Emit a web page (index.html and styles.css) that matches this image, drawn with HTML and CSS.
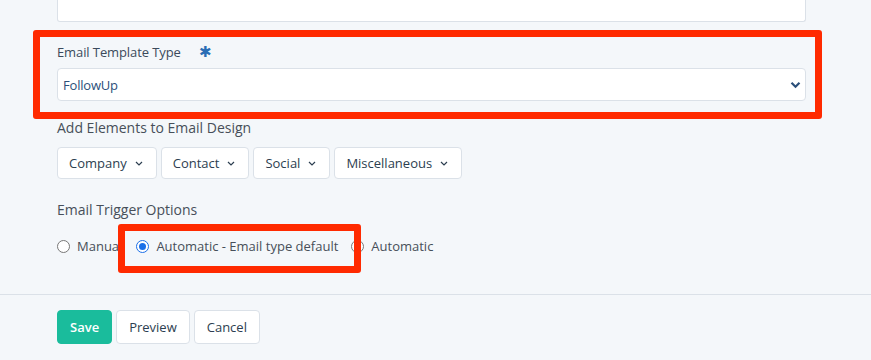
FILE: index.html
```html
<!DOCTYPE html>
<html lang="en">
<head>
    <meta charset="UTF-8">
    <title>Email Template</title>
    <link rel="stylesheet" href="styles.css">
</head>
<body>
    <div class="form">
        <div class="textarea"></div>

        <div class="field">
            <div class="label">Email Template Type <span class="required">&#x2731;</span></div>
            <div class="select">
                <span>FollowUp</span>
                <svg width="11" height="8" viewBox="0 0 11 8"><path d="M1.5 1.8 L5.5 5.8 L9.5 1.8" fill="none" stroke="#2b4f7a" stroke-width="2.2"/></svg>
            </div>
        </div>

        <div class="section-title">Add Elements to Email Design</div>
        <div class="elements">
            <div class="drop">Company <svg width="8" height="5" viewBox="0 0 8 5"><path d="M1 1 L4 4 L7 1" fill="none" stroke="#2c3e50" stroke-width="1.2"/></svg></div>
            <div class="drop">Contact <svg width="8" height="5" viewBox="0 0 8 5"><path d="M1 1 L4 4 L7 1" fill="none" stroke="#2c3e50" stroke-width="1.2"/></svg></div>
            <div class="drop">Social <svg width="8" height="5" viewBox="0 0 8 5"><path d="M1 1 L4 4 L7 1" fill="none" stroke="#2c3e50" stroke-width="1.2"/></svg></div>
            <div class="drop">Miscellaneous <svg width="8" height="5" viewBox="0 0 8 5"><path d="M1 1 L4 4 L7 1" fill="none" stroke="#2c3e50" stroke-width="1.2"/></svg></div>
        </div>

        <div class="section-title trigger-title">Email Trigger Options</div>
        <div class="radios">
            <label class="radio radio-manual"><span class="dot"></span>Manual</label>
            <label class="radio checked"><span class="dot"></span>Automatic - Email type default</label>
            <label class="radio"><span class="dot"></span>Automatic</label>
        </div>
    </div>

    <div class="actions">
        <button class="btn btn-save">Save</button>
        <button class="btn">Preview</button>
        <button class="btn">Cancel</button>
    </div>

    <!-- annotation boxes -->
    <div class="mark mark-type"></div>
    <div class="mark mark-trigger"></div>
</body>
</html>
```

FILE: styles.css
```css
body {
    margin: 0;
    font-family: 'Open Sans', sans-serif;
    color: #2c3e50;
    background-color: #f4f7fa;
    position: relative;
    height: 360px;
    overflow: hidden;
}
.form {
    padding: 0 65px 0 57px;
}
.textarea {
    height: 21px;
    background: #fff;
    border: 1px solid #dbe1e8;
    border-top: none;
    border-radius: 0 0 3px 3px;
}
.field {
    margin-top: 20px;
}
.label {
    font-size: 13px;
    line-height: 18px;
    color: #3b4a5c;
    letter-spacing: -0.1px;
}
.required {
    color: #2a6db5;
    font-size: 15px;
    margin-left: 15px;
}
.select {
    margin-top: 7px;
    height: 31px;
    background: #fff;
    border: 1px solid #dbe1e8;
    border-radius: 4px;
    display: flex;
    align-items: center;
    justify-content: space-between;
    padding: 0 4px 0 5px;
    font-size: 13px;
    color: #2b4f7a;
    letter-spacing: -0.2px;
}
.section-title {
    margin-top: 17px;
    font-size: 14px;
    line-height: 20px;
    color: #474f59;
}
.trigger-title {
    margin-top: 21px;
}
.elements {
    margin-top: 9px;
    display: flex;
    gap: 4px;
}
.drop {
    height: 30px;
    display: flex;
    align-items: center;
    gap: 8px;
    padding: 0 13px 0 11px;
    background: #fff;
    border: 1px solid #dbe1e8;
    border-radius: 4px;
    font-size: 13px;
    color: #2c3e50;
}
.radios {
    margin-top: 16px;
    display: flex;
    gap: 13px;
    height: 20px;
}
.radio {
    display: flex;
    align-items: center;
    gap: 7px;
    font-size: 13px;
    color: #474f59;
}
.radio-manual {
    margin-right: 1px;
}
.dot {
    width: 11px;
    height: 11px;
    border: 1px solid #777;
    border-radius: 50%;
    background: #fff;
    position: relative;
}
.radio.checked .dot {
    border-color: #1a6fe8;
}
.radio.checked .dot::after {
    content: '';
    position: absolute;
    left: 2px;
    top: 2px;
    width: 7px;
    height: 7px;
    border-radius: 50%;
    background: #1a6fe8;
}
.actions {
    margin-top: 38px;
    border-top: 1px solid #dbe1e8;
    padding: 15px 57px 0;
    display: flex;
    gap: 4px;
}
.btn {
    height: 34px;
    padding: 0 12px;
    font-family: 'Open Sans', sans-serif;
    font-size: 13px;
    color: #2c3e50;
    background: #fff;
    border: 1px solid #dbe1e8;
    border-radius: 4px;
}
.btn-save {
    background: #1abc9c;
    border-color: #1abc9c;
    color: #fff;
    font-weight: 600;
    padding: 0 12px;
}
.mark {
    position: absolute;
    border: 7px solid #ff2a00;
    border-radius: 3px;
    box-sizing: border-box;
}
.mark-type {
    left: 33px;
    top: 30px;
    width: 789px;
    height: 89px;
}
.mark-trigger {
    left: 118px;
    top: 224px;
    width: 243px;
    height: 49px;
}
```
